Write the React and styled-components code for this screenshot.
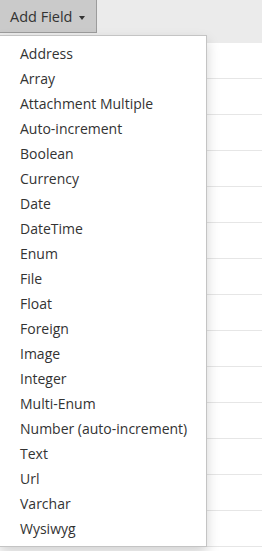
import React from 'react';
import styled, { createGlobalStyle } from 'styled-components';

const fieldTypes = [
  'Address',
  'Array',
  'Attachment Multiple',
  'Auto-increment',
  'Boolean',
  'Currency',
  'Date',
  'DateTime',
  'Enum',
  'File',
  'Float',
  'Foreign',
  'Image',
  'Integer',
  'Multi-Enum',
  'Number (auto-increment)',
  'Text',
  'Url',
  'Varchar',
  'Wysiwyg',
];

const App = () => {
  return (
    <Page>
      <GlobalStyle />
      <Header>
        <AddButton>
          Add Field <Caret />
        </AddButton>
      </Header>
      <Rows>
        {Array.from({ length: 14 }).map((_, i) => (
          <Row key={i} />
        ))}
      </Rows>
      <Menu>
        {fieldTypes.map((t) => (
          <MenuItem key={t}>{t}</MenuItem>
        ))}
      </Menu>
    </Page>
  );
};

export default App;

const GlobalStyle = createGlobalStyle`
  html, body {
    margin: 0;
    padding: 0;
    background: #fff;
    overflow: hidden;
  }
  body {
    font-family: "Open Sans", "Liberation Sans", sans-serif;
    font-size: 14px;
    color: #333;
  }
`;

const Page = styled.div`
  position: relative;
  width: 262px;
  height: 551px;
  overflow: hidden;
`;

const Header = styled.div`
  height: 43px;
  background: #ebebeb;
  display: flex;
  align-items: flex-start;
`;

const AddButton = styled.div`
  display: flex;
  align-items: center;
  gap: 6px;
  height: 31px;
  padding: 1px 11px 0 10px;
  background: #cacaca;
  border-right: 1px solid #9c9c9c;
  border-bottom: 1px solid #9c9c9c;
  color: #333;
  font-size: 14.5px;
`;

const Caret = styled.span`
  display: inline-block;
  width: 0;
  height: 0;
  margin-top: 2px;
  border-top: 4px solid #333;
  border-left: 3.5px solid transparent;
  border-right: 3.5px solid transparent;
`;

const Rows = styled.div`
  display: flex;
  flex-direction: column;
`;

const Row = styled.div`
  height: 35px;
  border-bottom: 1px solid #e6e6e6;
`;

const Menu = styled.ul`
  position: absolute;
  top: 35px;
  left: -1px;
  width: 208px;
  box-sizing: border-box;
  margin: 0;
  padding: 5px 0;
  list-style: none;
  background: #fff;
  border: 1px solid #c4c4c4;
  box-shadow: 0 6px 12px rgba(0, 0, 0, 0.175);
`;

const MenuItem = styled.li`
  padding: 3px 20px;
  line-height: 19px;
  font-size: 14px;
  color: #333;
  white-space: nowrap;
`;
